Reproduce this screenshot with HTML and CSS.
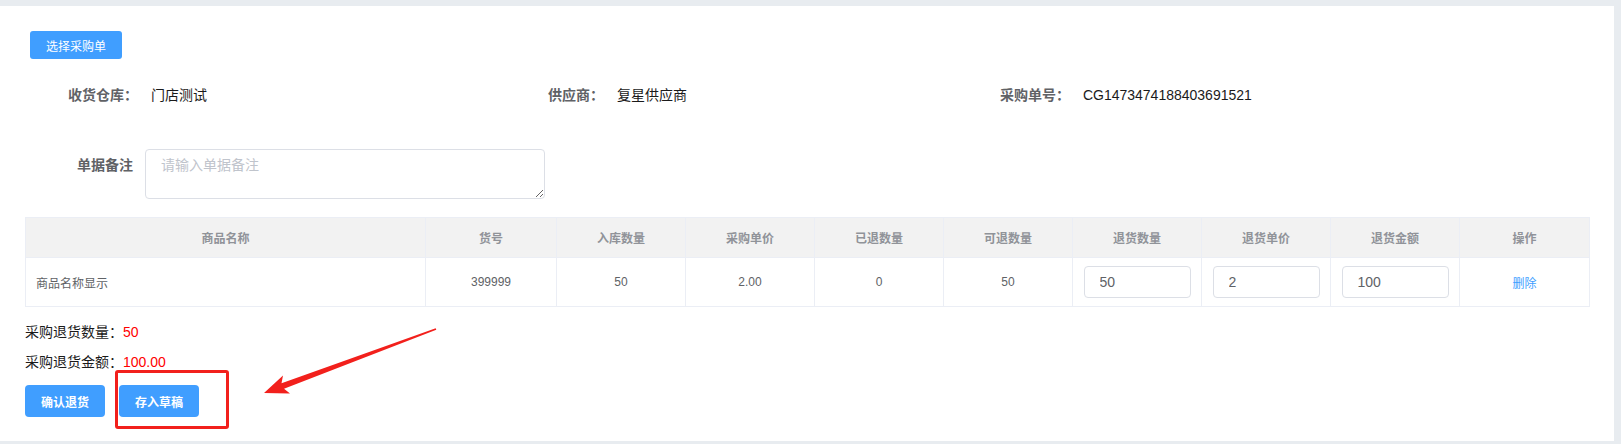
FILE: index.html
```html
<!DOCTYPE html>
<html lang="zh-CN">
<head>
  <meta charset="UTF-8" />
  <title>采购退货</title>
  <link rel="stylesheet" href="styles.css">
</head>
<body>
  <div class="page">
    <div class="panel">
      <div class="top-bar">
        <button class="btn btn-small">选择采购单</button>
      </div>

      <div class="info-row">
        <div class="info-item">
          <span class="info-label">收货仓库：</span>
          <span class="info-value">门店测试</span>
        </div>
        <div class="info-item">
          <span class="info-label">供应商：</span>
          <span class="info-value">复星供应商</span>
        </div>
        <div class="info-item">
          <span class="info-label">采购单号：</span>
          <span class="info-value">CG1473474188403691521</span>
        </div>
      </div>

      <div class="remark-row">
        <label class="remark-label">单据备注</label>
        <textarea class="remark-input" placeholder="请输入单据备注"></textarea>
      </div>

      <table class="goods-table">
        <colgroup>
          <col style="width:400px">
          <col style="width:131px">
          <col style="width:129px">
          <col style="width:129px">
          <col style="width:129px">
          <col style="width:129px">
          <col style="width:129px">
          <col style="width:129px">
          <col style="width:129px">
          <col style="width:130px">
        </colgroup>
        <thead>
          <tr>
            <th>商品名称</th>
            <th>货号</th>
            <th>入库数量</th>
            <th>采购单价</th>
            <th>已退数量</th>
            <th>可退数量</th>
            <th>退货数量</th>
            <th>退货单价</th>
            <th>退货金额</th>
            <th>操作</th>
          </tr>
        </thead>
        <tbody>
          <tr>
            <td class="name-cell">商品名称显示</td>
            <td>399999</td>
            <td>50</td>
            <td>2.00</td>
            <td>0</td>
            <td>50</td>
            <td><input class="cell-input" type="text" value="50"></td>
            <td><input class="cell-input" type="text" value="2"></td>
            <td><input class="cell-input" type="text" value="100"></td>
            <td><a class="link-del" href="#">删除</a></td>
          </tr>
        </tbody>
      </table>

      <div class="summary">
        <p>采购退货数量：<span class="red">50</span></p>
        <p>采购退货金额：<span class="red">100.00</span></p>
      </div>

      <div class="actions">
        <button class="btn btn-action">确认退货</button>
        <button class="btn btn-action">存入草稿</button>
      </div>
    </div>

    <!-- 标注：红框 + 箭头 -->
    <div class="mark-box"></div>
    <svg class="mark-arrow" width="1621" height="444" viewBox="0 0 1621 444">
      <polygon fill="#f2201c"
        points="264,393 290,393.5 284,388.8 436.3,329.8 435.7,328.2 281.5,383.2 283,375.5" />
    </svg>
  </div>
</body>
</html>
```

FILE: styles.css
```css
* {
  box-sizing: border-box;
}

body {
  margin: 0;
  font-family: "Liberation Sans", "Noto Sans CJK SC", sans-serif;
  background: #e8ecf0;
  color: #333;
}

.page {
  position: relative;
  width: 1621px;
  height: 444px;
  padding-top: 6px;
}

.panel {
  width: 1614px;
  height: 435px;
  background: #fff;
  padding: 25px 25px 0 25px;
}

.top-bar {
  padding-left: 5px;
  height: 28px;
}

.btn {
  border: none;
  background: #409eff;
  color: #fff;
  font-family: inherit;
  font-size: 12px;
  border-radius: 3px;
  cursor: pointer;
}

.btn-small {
  width: 92px;
  height: 28px;
  padding: 0;
}

.info-row {
  display: grid;
  grid-template-columns: 480px 452px 1fr;
  padding-left: 43px;
  margin-top: 16px;
  height: 40px;
  line-height: 40px;
  font-size: 14px;
}

.info-label {
  color: #606266;
  font-weight: 700;
  margin-right: 9px;
}

.info-value {
  color: #1a1a1a;
}

.remark-row {
  display: flex;
  margin-top: 34px;
  height: 50px;
}

.remark-label {
  width: 120px;
  text-align: right;
  padding-right: 12px;
  padding-top: 6px;
  line-height: 20px;
  font-size: 14px;
  font-weight: 700;
  color: #606266;
}

.remark-input {
  width: 400px;
  height: 50px;
  border: 1px solid #dcdfe6;
  border-radius: 4px;
  padding: 5px 15px;
  font-family: inherit;
  font-size: 14px;
  line-height: 20px;
  color: #606266;
}

.remark-input::placeholder {
  color: #c0c4cc;
}

.goods-table {
  margin-top: 18px;
  width: 1564px;
  table-layout: fixed;
  border-collapse: collapse;
  font-size: 12px;
}

.goods-table th,
.goods-table td {
  border: 1px solid #ebeef5;
  text-align: center;
  padding: 0;
}

.goods-table th {
  height: 40px;
  background: #f2f2f2;
  color: #909399;
  font-weight: 700;
}

.goods-table td {
  height: 49px;
  color: #606266;
}

.goods-table td.name-cell {
  text-align: left;
  padding-left: 10px;
}

.cell-input {
  width: 107px;
  height: 32px;
  border: 1px solid #dcdfe6;
  border-radius: 4px;
  padding: 0 15px;
  font-family: inherit;
  font-size: 14px;
  color: #606266;
  vertical-align: middle;
}

.link-del {
  color: #409eff;
  text-decoration: none;
}

.summary {
  margin-top: 10px;
  font-size: 14px;
  color: #1a1a1a;
}

.summary p {
  margin: 0;
  line-height: 30px;
}

.red {
  color: #f00;
}

.actions {
  display: flex;
  gap: 14px;
  margin-top: 8px;
}

.btn-action {
  width: 80px;
  height: 32px;
  font-weight: 700;
  border-radius: 4px;
}

.mark-box {
  position: absolute;
  left: 115px;
  top: 370px;
  width: 114px;
  height: 59px;
  border: 3px solid #f2201c;
  border-radius: 3px;
}

.mark-arrow {
  position: absolute;
  left: 0;
  top: 0;
  pointer-events: none;
}
```
